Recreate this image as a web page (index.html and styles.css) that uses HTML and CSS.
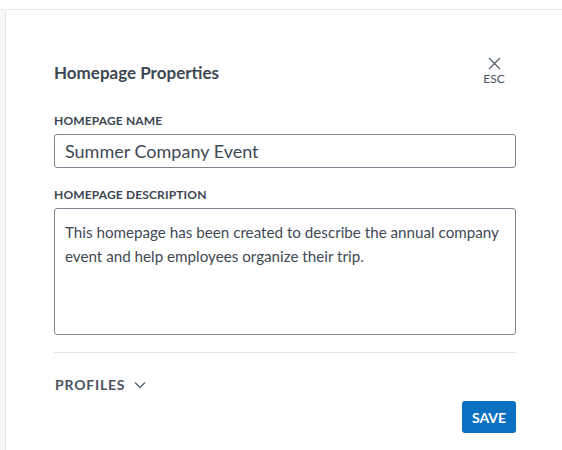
FILE: index.html
```html
<!DOCTYPE html>
<html lang="en">
<head>
<meta charset="utf-8">
<title>Homepage Properties</title>
<link rel="stylesheet" href="styles.css">
</head>
<body>
<div class="topbar"></div>
<div class="main">
  <div class="rail"></div>
  <div class="panel">
    <div class="header">
      <h1 class="title">Homepage Properties</h1>
      <button class="close" type="button">
        <svg class="close-icon" width="13" height="13" viewBox="0 0 13 13"><path d="M1 1 L12 12 M12 1 L1 12" stroke="#56606b" stroke-width="1.2" fill="none"/></svg>
        <span class="esc">ESC</span>
      </button>
    </div>
    <div class="field">
      <label class="label">HOMEPAGE NAME</label>
      <div class="input">Summer Company Event</div>
    </div>
    <div class="field field-desc">
      <label class="label">HOMEPAGE DESCRIPTION</label>
      <div class="textarea">This homepage has been created to describe the annual company event and help employees organize their trip.</div>
    </div>
    <div class="divider"></div>
    <div class="profiles">
      <span class="profiles-label">PROFILES</span>
      <svg class="chevron" width="12" height="8" viewBox="0 0 12 8"><path d="M1 1.5 L6 6.5 L11 1.5" stroke="#56606b" stroke-width="1.3" fill="none"/></svg>
    </div>
    <div class="actions">
      <button class="save" type="button">SAVE</button>
    </div>
  </div>
</div>
</body>
</html>
```
FILE: styles.css
```css
* { box-sizing: border-box; }
body {
  margin: 0;
  background: #ffffff;
  font-family: "Lato", "Open Sans", sans-serif;
  color: #3e4955;
}
.topbar {
  height: 10px;
  border-bottom: 1px solid #e6e8ea;
}
.main {
  display: flex;
  min-height: 440px;
}
.rail {
  width: 6px;
  background: #f6f7f8;
  border-right: 1px solid #e3e5e8;
}
.panel {
  flex: 1;
  padding: 0 46px 0 48px;
}
.header {
  display: flex;
  justify-content: space-between;
  align-items: flex-start;
  padding-top: 51px;
}
.title {
  margin: 0;
  font-size: 17px;
  line-height: 24px;
  font-weight: 700;
  color: #3c4752;
}
.close {
  display: flex;
  flex-direction: column;
  align-items: center;
  width: 28px;
  margin: -4px 8px 0 0;
  padding: 0;
  border: 0;
  background: none;
  font-family: inherit;
  color: #4a545f;
}
.close-icon { display: block; }
.esc {
  font-size: 12px;
  line-height: 14px;
  margin-top: 2px;
}
.field {
  margin-top: 27px;
}
.field-desc {
  margin-top: 19px;
}
.label {
  display: block;
  font-size: 12px;
  line-height: 16px;
  font-weight: 700;
  letter-spacing: 0.15px;
  color: #3b4651;
  margin-bottom: 5px;
}
.input {
  height: 34px;
  border: 1px solid #7c8691;
  border-radius: 3px;
  padding: 0 10px;
  font-size: 18px;
  line-height: 32px;
  color: #3e4955;
}
.textarea {
  height: 127px;
  border: 1px solid #7c8691;
  border-radius: 3px;
  padding: 11px 10px;
  font-size: 15.2px;
  line-height: 24px;
  color: #3e4955;
}
.divider {
  margin-top: 17px;
  height: 1px;
  background: #e3e5e8;
}
.profiles {
  display: flex;
  align-items: center;
  gap: 9px;
  margin-top: 21px;
  height: 20px;
  padding-left: 1px;
}
.profiles-label {
  font-size: 14px;
  font-weight: 700;
  letter-spacing: 0.8px;
  color: #4a545f;
}
.chevron { display: block; margin-top: 1px; }
.actions {
  display: flex;
  justify-content: flex-end;
  margin-top: 7px;
}
.save {
  width: 54px;
  height: 32px;
  border: 0;
  border-radius: 3px;
  background: #0a70c2;
  color: #ffffff;
  font-family: inherit;
  font-size: 14px;
  font-weight: 700;
  padding: 0;
}
```
